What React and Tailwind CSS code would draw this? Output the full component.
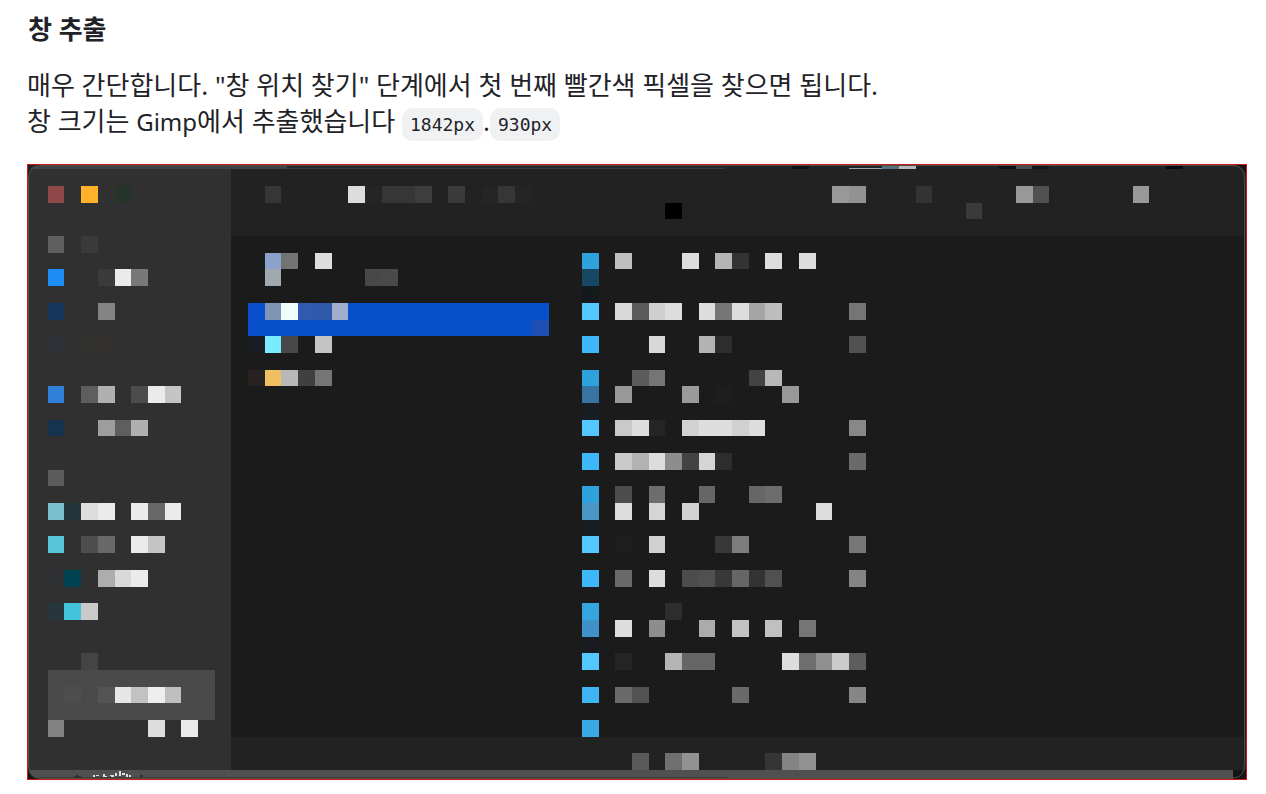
const PITCH = 16.69;
const LEFT = 20.8;
const TOP = 22;

// Each row of the mosaic: [row index, "column:colour column:colour ..."].
// Two-digit colours are shades of grey.
const CELLS = [
  [0, "0:8e4848 2:ffb22a 4:263328 13:36 18:dd 19:25 20:36 21:36 22:3d 24:3a 26:25 27:36 28:25 47:98 48:92 52:33 58:98 59:50 65:98"],
  [1, "37:00 55:3a"],
  [3, "0:5f 2:3a"],
  [4, "13:8ba3cc 14:73 16:dd 32:2fa2de 34:bf 38:dd 40:b5 41:33 43:dd 45:dd"],
  [5, "0:1d8df5 3:3a 4:eb 5:78 13:a0a8b0 19:48 20:4a 32:164863"],
  [6, "32:14191c"],
  [7, "0:18375e 3:84 13:7d95b3 14:effffe 15:3059b0 16:3059ac 17:a0b0cc 32:54c7ff 34:d9 35:5b 36:cf 37:dd 39:dd 40:76 41:dd 42:a5 43:bd 48:75"],
  [8, "29:1d4fb4"],
  [9, "0:303238 2:32312f 3:32312f 12:1a1d23 13:7aecff 14:48 16:c4 32:3fb8f9 36:d8 39:b3 40:2d 48:51"],
  [11, "12:282321 13:efbf61 14:b8 15:40 16:75 32:2fa2de 35:5b 36:75 42:43 43:b8"],
  [12, "0:307fd8 2:5e 3:b0 5:4c 6:eb 7:c5 32:3874a3 34:98 38:9a 40:1e 44:98"],
  [13, "32:171d22"],
  [14, "0:17324f 3:9d 4:5e 5:b0 32:54c7ff 34:c9 35:dd 36:25 38:d2 39:dd 40:dd 41:d0 42:dd 48:88"],
  [16, "32:3fb8f9 34:c9 35:b3 36:dd 37:8d 38:43 39:d5 40:2d 48:6a"],
  [17, "0:5c"],
  [18, "32:2fa2de 34:4c 36:6d 39:66 42:66 43:6d"],
  [19, "0:7bbfcd 1:213438 2:dd 3:eb 5:eb 6:68 7:eb 32:4c96c5 34:dd 36:d5 38:d2 46:dd"],
  [20, "32:171d22"],
  [21, "0:58c4d8 2:4e 3:68 5:eb 6:c5 32:54c7ff 34:1e 36:d0 40:38 41:7c 48:77"],
  [23, "0:2e3034 1:004250 3:ad 4:d9 5:eb 32:3fb8f9 34:6a 36:dd 38:4c 39:50 40:38 41:66 42:33 43:50 48:84"],
  [25, "0:26363c 1:43c4dc 2:c9 32:34a5de 37:2d"],
  [26, "32:4091c8 34:dd 36:8d 39:ab 41:c3 43:c0 45:75"],
  [27, "32:171b1f"],
  [28, "2:44 32:54c7ff 34:25 37:b5 38:66 39:66 44:dd 45:6e 46:90 47:cb 48:5d"],
  [30, "1:4e 3:54 4:e6 5:c2 6:ee 7:bf 32:3fb4f2 34:6a 35:52 41:6a 48:86"],
  [32, "0:82 6:dd 8:eb 32:3aa8e4"],
  [34, "35:5a 37:70 38:92 43:35 44:84 45:92"],
];

const colX = (c) => Math.round(LEFT + c * PITCH);
const rowY = (r) => Math.round(TOP + r * PITCH);

function Block({ col, row, cols = 1, rows = 1, fill }) {
  return (
    <rect
      x={colX(col)}
      y={rowY(row)}
      width={colX(col + cols) - colX(col)}
      height={rowY(row + rows) - rowY(row)}
      fill={fill}
    />
  );
}

function Mosaic() {
  return (
    <svg
      viewBox="0 0 1220 616"
      className="block h-auto w-full"
      shapeRendering="crispEdges"
      role="img"
    >
      <rect width="1220" height="616" fill="#1b1b1b" />
      <rect x="204" y="1" width="1015" height="71" fill="#222222" />
      <rect x="204" y="573" width="1015" height="42" fill="#222222" />
      <rect x="1" y="1" width="203" height="614" fill="#303030" />
      <rect x="1" y="2" width="259" height="3" fill="#434343" />
      <rect x="260" y="2" width="438" height="2" fill="#272727" />
      <rect x="260" y="4" width="438" height="1" fill="#3a3a3a" />
      <rect x="765" y="2" width="17" height="3" fill="#111111" />
      <rect x="822" y="4" width="50" height="1" fill="#a0a0a0" />
      <rect x="855" y="2" width="17" height="3" fill="#53707f" />
      <rect x="872" y="2" width="17" height="3" fill="#b8b8b8" />
      <rect x="972" y="2" width="17" height="3" fill="#0d0d0d" />
      <rect x="989" y="2" width="16" height="3" fill="#4b4b4b" />
      <rect x="1005" y="2" width="17" height="3" fill="#151515" />
      <rect x="1139" y="2" width="17" height="3" fill="#080808" />

      <Block col={12} row={7} cols={18} rows={2} fill="#074fcb" />
      <Block col={0} row={29} cols={10} rows={3} fill="#4a4a4a" />
      {CELLS.map(([row, cells]) =>
        cells.split(" ").map((cell) => {
          const [col, tone] = cell.split(":");
          const fill = "#" + (tone.length === 2 ? tone.repeat(3) : tone);
          return <Block key={row + "-" + col} col={Number(col)} row={row} fill={fill} />;
        })
      )}

      <rect x="1" y="606" width="1205" height="9" fill="#505050" />
      <rect x="10" y="613" width="690" height="1" fill="#3c3c3c" />
      <path
        d="M66 611h2v2h-2zM69 611h3v1h-3zM76 610h2v2h2v1h-4zM83 611h4v2h-3zM88 609h2v3h-2zM92 607h2v5h-2zM95 609h3v2h-3zM99 610h2v3h-2zM102 611h2v2h-2z"
        fill="#e0e0e0"
      />
      <path d="M46 613l4-2 5 2v1h-9zM113 611h3v2h-3z" fill="#303030" />
      <g shapeRendering="auto" fill="none">
        <path d="M1 1h13Q1 1 1 14z" fill="#1c2324" />
        <path d="M1 601Q1 615 15 615H1z" fill="#161616" />
        <path d="M1206 1h13v13Q1219 1 1206 1z" fill="#111111" />
        <path d="M1206 606h13v9h-13z" fill="#141414" />
        <path
          d="M14 1.5H1206Q1217.5 2 1217.5 15V600Q1217.5 614 1206 614M14 614Q2 614 1.5 600V15Q2 2 14 1.5"
          stroke="#4a4e4e"
        />
      </g>
      <path d="M0 0H1220V616H0zM1 1V615H1219V1z" fillRule="evenodd" fill="#d01818" />
    </svg>
  );
}

function Code({ children }) {
  return (
    <code className="rounded-[10px] bg-[#eff1f3] px-2 py-[6px] font-['DejaVu_Sans_Mono',monospace] text-[18px]">
      {children}
    </code>
  );
}

export default function App() {
  return (
    <main className="bg-white pt-[11px] pr-[19px] pl-[27px] font-['Noto_Sans','Noto_Sans_CJK_KR',sans-serif] text-[26px] text-[#1f2328]">
      <h3 className="mb-5 pl-px leading-9 font-bold">창 추출</h3>
      <p className="mb-[21px] leading-9">
        매우 간단합니다. "창 위치 찾기" 단계에서 첫 번째 빨간색 픽셀을 찾으면 됩니다.
        <br />
        창 크기는 <span className="text-2xl">Gimp</span>에서 추출했습니다 <Code>1842px</Code>.
        <Code>930px</Code>
      </p>
      <figure>
        <Mosaic />
      </figure>
    </main>
  );
}
